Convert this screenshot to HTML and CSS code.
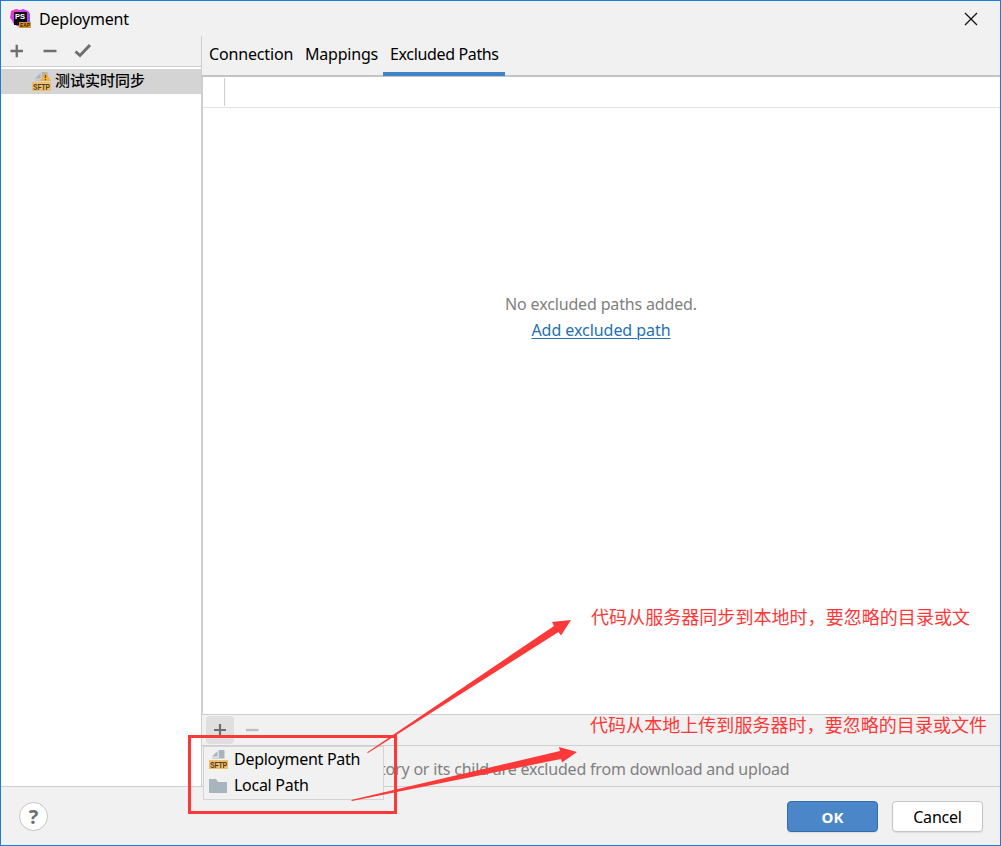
FILE: index.html
```html
<!DOCTYPE html>
<html lang="en">
<head>
<meta charset="utf-8">
<title>Deployment</title>
<link rel="stylesheet" href="styles.css">
</head>
<body>
<svg width="0" height="0" class="defs">
  <defs>
    <linearGradient id="psg" x1="0" y1="0" x2="1" y2="1"><stop offset="0" stop-color="#ff3e98"/><stop offset=".4" stop-color="#c93cf5"/><stop offset="1" stop-color="#6a57ff"/></linearGradient>
    <symbol id="sftp" viewBox="0 0 20 20">
      <path d="M3 6.500 8.500 1V6.500zM9.700 0H15.500V8.500H3V7.700H9.700z" fill="#a9b5bd"/>
      <rect x="0" y="10" width="19" height="9" fill="#f2bd6c"/>
      <text x="9.500" y="17.700" text-anchor="middle" textLength="17" lengthAdjust="spacingAndGlyphs" class="sftp-text">SFTP</text>
    </symbol>
  </defs>
</svg>
<div class="window">
  <header class="titlebar">
    <svg class="app-icon" width="22" height="22" viewBox="0 0 22 22">
      <path d="M1 3 6 1 10 2 13 1 18 3 20 6 20 14 14 20 7 18 3 15 2 12 0 10z" fill="url(#psg)"/>
      <rect x="4" y="4" width="13" height="13" fill="#100b14"/>
      <text x="5" y="11" textLength="10" lengthAdjust="spacingAndGlyphs" class="ps-text">PS</text>
      <rect x="9" y="14" width="12" height="6" fill="#d6962d"/>
      <text x="10" y="19.200" textLength="10" lengthAdjust="spacingAndGlyphs" class="eap-text">EAP</text>
    </svg>
    <span class="title">Deployment</span>
    <svg class="close" width="14" height="14" viewBox="0 0 14 14"><path d="M1 1 13 13M13 1 1 13" stroke="#111" stroke-width="1.300"/></svg>
  </header>
  <div class="body">
    <aside class="sidebar">
      <div class="tools">
        <svg width="90" height="20" viewBox="0 0 90 20" fill="none" stroke="#6e6e6e">
          <path d="M1.500 10H14M7.750 3.800V16.200M34.500 10H47.500" stroke-width="2.300"/>
          <path d="M66.500 10.500 71 14.500 81 4" stroke-width="3"/>
        </svg>
      </div>
      <div class="server">
        <svg width="20" height="20" viewBox="0 0 20 20"><use href="#sftp"/><path d="M13.500 0 19 9H8z" fill="#f4af3d"/><path d="M13.500 2.800V6M13.500 7V8.200" stroke="#6e5320" stroke-width="1.300"/></svg>
        <span class="server-name">测试实时同步</span>
      </div>
    </aside>
    <main class="main">
      <nav class="tabs">
        <span class="tab connection">Connection</span>
        <span class="tab mappings">Mappings</span>
        <span class="tab active">Excluded Paths</span>
      </nav>
      <section class="table">
        <div class="table-head"></div>
        <div class="empty">
          <span class="none">No excluded paths added.</span>
          <a class="add-link">Add excluded path</a>
        </div>
      </section>
      <div class="table-tools">
        <span class="tool-button"><svg width="14" height="14" viewBox="0 0 14 14"><path d="M1 7H13M7 1V13" stroke="#6e6e6e" stroke-width="2.200"/></svg></span>
        <svg class="remove" width="13" height="14" viewBox="0 0 13 14"><path d="M0 7H12.500" stroke="#bdbdbd" stroke-width="2.300"/></svg>
      </div>
      <div class="hint"><span>tory or its child are excluded from download and upload</span></div>
    </main>
  </div>
  <footer class="footer">
    <span class="help">?</span>
    <span class="button ok"><span>OK</span></span>
    <span class="button cancel"><span>Cancel</span></span>
  </footer>
  <div class="popup">
    <div class="item"><svg width="20" height="20"><use href="#sftp"/></svg><span class="deploy">Deployment Path</span></div>
    <div class="item"><svg width="20" height="20"><path d="M0 3H7L9 6H18V17H0z" fill="#a9b5bd"/></svg><span class="local">Local Path</span></div>
  </div>
  <svg class="marks" width="1001" height="846" viewBox="0 0 1001 846">
    <rect x="189.500" y="736.500" width="206" height="76" fill="none" stroke="#fc3838" stroke-width="3"/>
    <path d="M367 752.500 554 626 552 622 571 620 561 635.500 558.500 632 368 753z" fill="#fc3838"/>
    <path d="M351 800 560 751 559 747 577 752 562 762.500 561 759 352 801z" fill="#fc3838"/>
  </svg>
  <span class="note first">代码从服务器同步到本地时，要忽略的目录或文</span>
  <span class="note second">代码从本地上传到服务器时，要忽略的目录或文件</span>
</div>
</body>
</html>
```

FILE: styles.css
```css
* { box-sizing: border-box; }
body { margin: 0; overflow: hidden; font: 16px/22px "Noto Sans", "Noto Sans CJK SC", sans-serif; color: #000; }
.defs { position: absolute; }
svg { display: block; flex: none; }
span, a { white-space: nowrap; }
.window { position: relative; width: 1001px; height: 846px; border: 1px solid #1a7fd4; background: #f1f1f1; display: flex; flex-direction: column; }
.titlebar { height: 35px; flex: none; display: flex; align-items: flex-start; padding: 7px 22px 0 9px; }
.title { margin: 0 auto 0 7px; letter-spacing: -.2px; }
.close { margin-top: 4px; }
.body { height: 750px; flex: none; display: flex; }
.sidebar { width: 200px; flex: none; background: #fff; }
.tools { height: 31px; background: #f1f1f1; border-bottom: 1px solid #cecece; padding: 5px 0 0 8px; }
.server { height: 25px; margin-top: 2px; background: #d4d4d4; display: flex; align-items: center; gap: 3px; padding-left: 31px; font: 500 15px/22px "Noto Sans CJK SC", sans-serif; }
.server-name { padding-bottom: 3px; }
.sftp-text { font: bold 9px "Liberation Sans", sans-serif; fill: #4d3d20; }
.ps-text { font: bold 8px "Liberation Sans", sans-serif; fill: #fff; }
.eap-text { font: bold 6px "Liberation Sans", sans-serif; fill: #30200b; }
.main { flex: 1; border-left: 1px solid #cecece; display: flex; flex-direction: column; }
.tabs { height: 41px; flex: none; display: flex; border-bottom: 2px solid #c4c4c4; padding-left: 7px; letter-spacing: -.15px; }
.tab { height: 40px; padding-top: 7px; }
.connection { width: 96px; }
.mappings { width: 78px; letter-spacing: -.2px; }
.active { width: 122px; padding-left: 7px; border-bottom: 4px solid #4083c9; letter-spacing: -.35px; }
.table { height: 637px; flex: none; background: #fff; border-left: 1px solid #cecece; }
.table-head { height: 31px; border-bottom: 1px solid #e2e2e2; padding: 1px 0 1px 21px; }
.table-head::before { content: ""; display: block; width: 1px; height: 28px; background: #cecece; }
.empty { padding-top: 185px; display: flex; flex-direction: column; align-items: center; gap: 4px; margin-right: 1px; color: #808080; }
.none { letter-spacing: -.15px; }
.add-link { letter-spacing: -.05px; color: #2470b3; text-decoration: underline; text-underline-offset: 2px; text-decoration-thickness: 1px; }
.table-tools { height: 32px; flex: none; border: solid #cecece; border-width: 1px 0; display: flex; padding: 1px 0 0 4px; gap: 12px; }
.tool-button { width: 28px; height: 28px; border-radius: 4px; background: #dfdfdf; padding: 7px; }
.remove { margin-top: 7px; }
.hint { flex: 1; color: #808080; padding: 12px 0 0 178px; letter-spacing: -.2px; }
.footer { flex: 1; border-top: 1px solid #cecece; display: flex; align-items: flex-start; padding: 14px 17px 0 18px; }
.help { width: 29px; height: 29px; margin: 1px auto 0 0; border: 1px solid #c4c4c4; border-radius: 50%; background: #fff; color: #6e6e6e; font: bold 20px/27px "Noto Sans", sans-serif; text-align: center; }
.button { width: 91px; height: 31px; border: 1px solid #c4c4c4; border-radius: 4px; background: #fff; text-align: center; line-height: 31px; box-shadow: 0 1px 1px #ddd; }
.ok { border-color: #346dad; background: #4b87c8; color: #fff; font-weight: 700; margin-right: 14px; font-size: 15px; }
.cancel { letter-spacing: -.2px; }
.popup { position: absolute; left: 202px; top: 745px; width: 181px; height: 54px; border: 1px solid #d4d4d4; background: #f1f1f1; }
.item { height: 26px; display: flex; align-items: center; gap: 5px; padding-left: 5px; letter-spacing: -.28px; }
.item span { padding-bottom: 2px; }
.marks { position: absolute; left: -1px; top: -1px; }
.note { position: absolute; color: #fc3838; font: 400 18px/24px "Noto Sans CJK SC", sans-serif; letter-spacing: .05px; }
.first { left: 590px; top: 603px; }
.second { left: 589px; top: 711px; }
```
